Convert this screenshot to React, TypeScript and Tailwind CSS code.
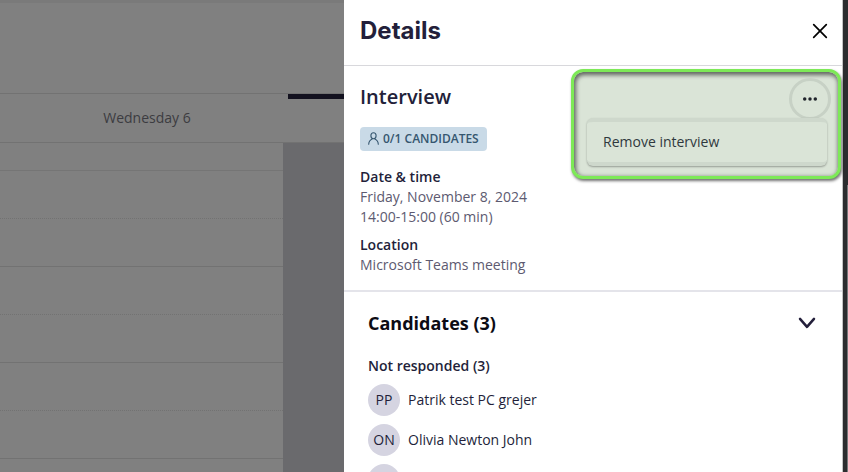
import { useState } from 'react';

interface Candidate {
  initials: string;
  name: string;
}

const candidates: Candidate[] = [
  { initials: 'PP', name: 'Patrik test PC grejer' },
  { initials: 'ON', name: 'Olivia Newton John' },
  { initials: '', name: '' },
];

// Each hour is split by a dotted half-hour line
const hours = [9, 10, 11, 12];

const PersonIcon = () => (
  <svg width="11" height="14" viewBox="0 0 11 14" fill="none" stroke="currentColor" strokeWidth="1.1" strokeLinecap="round" aria-hidden="true">
    <ellipse cx="5.5" cy="3.8" rx="2.6" ry="3" />
    <path d="M.7 12.2C.9 9.2 2.3 7.8 4.2 7M10.3 12.2C10.1 9.2 8.7 7.8 6.8 7" />
  </svg>
);

const CloseIcon = () => (
  <svg width="16" height="16" viewBox="0 0 16 16" fill="none" stroke="currentColor" strokeWidth="1.7" strokeLinecap="round" aria-hidden="true">
    <path d="M1.7 1.7 14.3 14.3M14.3 1.7 1.7 14.3" />
  </svg>
);

const ChevronIcon = () => (
  <svg width="18" height="12" viewBox="0 0 18 12" fill="none" stroke="currentColor" strokeWidth="2.5" strokeLinecap="round" strokeLinejoin="round" aria-hidden="true">
    <path d="M2 1.9 9 9.9 16 1.9" />
  </svg>
);

const DotsIcon = () => (
  <svg width="16" height="4" viewBox="0 0 16 4" fill="currentColor" aria-hidden="true">
    <circle cx="2.7" cy="2" r="1.75" />
    <circle cx="8" cy="2" r="1.75" />
    <circle cx="13.3" cy="2" r="1.75" />
  </svg>
);

const Calendar = () => (
  <div className="flex min-w-0 flex-1 flex-col bg-[#808080]">
    <div className="h-[94px] shrink-0 border-t-3 border-b border-t-[#7a7a7a] border-b-[#727272]" />
    <div className="flex h-[49px] shrink-0 border-b border-[#727272]">
      <div className="flex flex-1 items-center justify-center pl-1.5 text-sm text-[#3c3c41]">Wednesday 6</div>
      <div className="w-14 border-t-5 border-[#13111f]" />
    </div>
    <div className="flex flex-1">
      <div className="flex-1">
        <div className="h-7 border-b border-[#757575]" />
        {hours.map(hour => (
          <div key={hour} className="h-24 border-b border-[#727272]">
            <div className="h-12 border-b border-dotted border-[#727272]" />
          </div>
        ))}
      </div>
      <div className="w-[61px] bg-[#6a6a6d]" />
    </div>
  </div>
);

const InterviewInfo = () => {
  const [menuOpen, setMenuOpen] = useState(true);

  return (
    <section className="relative border-b-2 border-[#e4e4ea] px-4 pt-4 pb-[15px]">
      <h2 className="text-xl leading-[30px] font-semibold text-[#231f3a]">Interview</h2>
      <div className="mt-[15px] flex h-6 w-fit items-center gap-1 rounded bg-[#c9dae7] px-2 text-xs font-semibold text-[#35566f]">
        <PersonIcon />
        0/1 CANDIDATES
      </div>
      <dl className="mt-4 text-sm leading-5 text-[#5d5a70]">
        <dt className="font-semibold text-[#231f3a]">Date &amp; time</dt>
        <dd>Friday, November 8, 2024</dd>
        <dd>14:00-15:00 (60 min)</dd>
        <dt className="mt-2 font-semibold text-[#231f3a]">Location</dt>
        <dd>Microsoft Teams meeting</dd>
      </dl>

      {/* Highlighted actions area */}
      <div className="absolute top-[3px] right-px h-[110px] w-[270px] rounded-xl border-3 border-[#7de957] bg-[#dae4d7] shadow-[1px_2px_3px_#00000090,inset_1px_2px_4px_1px_#00000090]">
        <button
          type="button"
          aria-label="More actions"
          aria-expanded={menuOpen}
          onClick={() => setMenuOpen(!menuOpen)}
          className="absolute top-[6px] right-[7px] flex size-[42px] items-center justify-center rounded-full border-3 border-[#c7d1c5] text-[#20242b]"
        >
          <DotsIcon />
        </button>
        {menuOpen && (
          <div className="absolute top-[46px] right-[11px] w-60 rounded-md border-y-4 border-[#ced8cc] bg-[#dae4d7] shadow-[0_1px_2px_#00000050]">
            <button type="button" className="h-10 w-full px-4 text-left text-sm text-[#2f383d]">
              Remove interview
            </button>
          </div>
        )}
      </div>
    </section>
  );
};

const CandidateList = () => {
  const [open, setOpen] = useState(true);

  return (
    <section className="px-6 pt-4">
      <button
        type="button"
        aria-expanded={open}
        onClick={() => setOpen(!open)}
        className="flex h-[30px] w-full items-center justify-between pr-[2px] text-[#0c0b14]"
      >
        <span className="text-lg font-bold">Candidates (3)</span>
        <span className="text-[#231f3a]"><ChevronIcon /></span>
      </button>
      {open && (
        <>
          <h3 className="mt-[18px] text-sm leading-5 font-semibold text-[#231f3a]">Not responded (3)</h3>
          <ul className="mt-2 space-y-2 text-sm text-[#231f3a]">
            {candidates.map((c, i) => (
              <li key={i} className="flex items-center gap-2">
                <span className="flex size-8 items-center justify-center rounded-full bg-[#d5d4e1]">{c.initials}</span>
                {c.name}
              </li>
            ))}
          </ul>
        </>
      )}
    </section>
  );
};

export default function App() {
  return (
    <div className="flex h-screen overflow-hidden bg-white font-['Open_Sans','Noto_Sans',sans-serif]">
      <Calendar />
      <aside className="w-[499px] shrink-0 border-r border-[#c4c4c4] bg-white">
        <header className="flex h-[66px] items-center justify-between border-b border-[#d8d8dc] pr-[14px] pb-1 pl-4">
          <h1 className="font-[Inter,sans-serif] text-2xl font-bold text-[#231f3a]">Details</h1>
          <button type="button" aria-label="Close" className="text-black"><CloseIcon /></button>
        </header>
        <InterviewInfo />
        <CandidateList />
      </aside>
      <div className="flex w-[5px] shrink-0 flex-col bg-[#2c2d2f]">
        <div className="h-[185px]" />
        <div className="flex-1 border-r border-[#77787a]" />
      </div>
    </div>
  );
}
